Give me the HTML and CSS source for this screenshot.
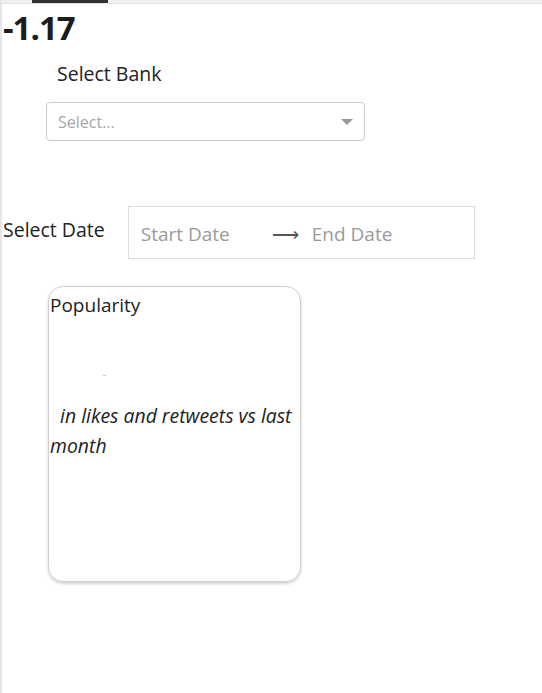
FILE: index.html
```html
<!DOCTYPE html>
<html>
<head>
<meta charset="utf-8">
<link rel="stylesheet" href="styles.css">
</head>
<body>
<div class="frame">
  <div class="topbar"><div class="tab"></div></div>
  <div class="content">
    <h1 class="value">-1.17</h1>
    <div class="bank">
      <div class="label bank-label">Select Bank</div>
      <div class="select">
        <span class="placeholder">Select...</span>
        <span class="caret"></span>
      </div>
    </div>
    <div class="date-row">
      <div class="label">Select Date</div>
      <div class="range">
        <span class="ph">Start Date</span>
        <span class="arrow">&#x27F6;</span>
        <span class="ph">End Date</span>
      </div>
    </div>
    <div class="card">
      <div class="card-title">Popularity</div>
      <div class="dash"></div>
      <div class="desc">&nbsp;&nbsp;in likes and retweets vs last month</div>
    </div>
  </div>
</div>
</body>
</html>
```

FILE: styles.css
```css
html, body {
  margin: 0;
  padding: 0;
  background: #fff;
}
body {
  font-family: "Open Sans", "Noto Sans", sans-serif;
  color: #222;
}
.frame {
  border-left: 2px solid #e6e6e6;
  min-height: 693px;
  box-sizing: border-box;
}
.topbar {
  height: 3px;
  background: #efefef;
  border-bottom: 1px solid #e2e2e2;
}
.tab {
  margin-left: 30px;
  width: 76px;
  height: 3px;
  background: #333;
}
.content {
  padding-left: 1px;
}
.value {
  margin: 0;
  padding-top: 2px;
  font-size: 33px;
  font-weight: 700;
  line-height: 44px;
  letter-spacing: -1px;
  color: #1c1c1c;
}
.label {
  font-size: 19.5px;
  line-height: 24px;
  color: #222;
}
.bank {
  padding-left: 43px;
  margin-top: 12px;
}
.bank-label {
  padding-left: 11px;
}
.select {
  margin-top: 16px;
  width: 319px;
  height: 39px;
  box-sizing: border-box;
  border: 1px solid #ccc;
  border-radius: 4px;
  display: flex;
  align-items: center;
  justify-content: space-between;
  padding: 0 10px 0 11px;
}
.placeholder {
  color: #a8a8a8;
  font-size: 16px;
}
.caret {
  width: 0;
  height: 0;
  border-left: 6px solid transparent;
  border-right: 6px solid transparent;
  border-top: 6px solid #999;
  margin-right: 1px;
}
.date-row {
  margin-top: 65px;
  display: flex;
  align-items: center;
  gap: 23px;
}
.date-row .label {
  margin-top: -6px;
}
.range {
  width: 347px;
  height: 53px;
  box-sizing: border-box;
  border: 1px solid #ddd;
  display: flex;
  align-items: center;
  padding-left: 12px;
  padding-top: 3px;
  font-size: 19px;
}
.ph {
  color: #9a9a9a;
}
.arrow {
  color: #555;
  margin: 0 13px 0 42px;
  font-size: 19px;
}
.card {
  margin: 27px 0 0 45px;
  width: 253px;
  height: 296px;
  box-sizing: border-box;
  border: 1px solid #cfcfcf;
  border-radius: 15px;
  box-shadow: 0 2px 3px rgba(0,0,0,0.18);
  padding: 5px 0 0 1px;
}
.card-title {
  font-size: 19px;
  line-height: 26px;
}
.dash {
  margin: 57px 0 0 53px;
  width: 3px;
  height: 1px;
  background: #f2b8c8;
}
.desc {
  margin-top: 25px;
  font-style: italic;
  font-size: 19.4px;
  line-height: 30px;
  color: #222;
}
```
